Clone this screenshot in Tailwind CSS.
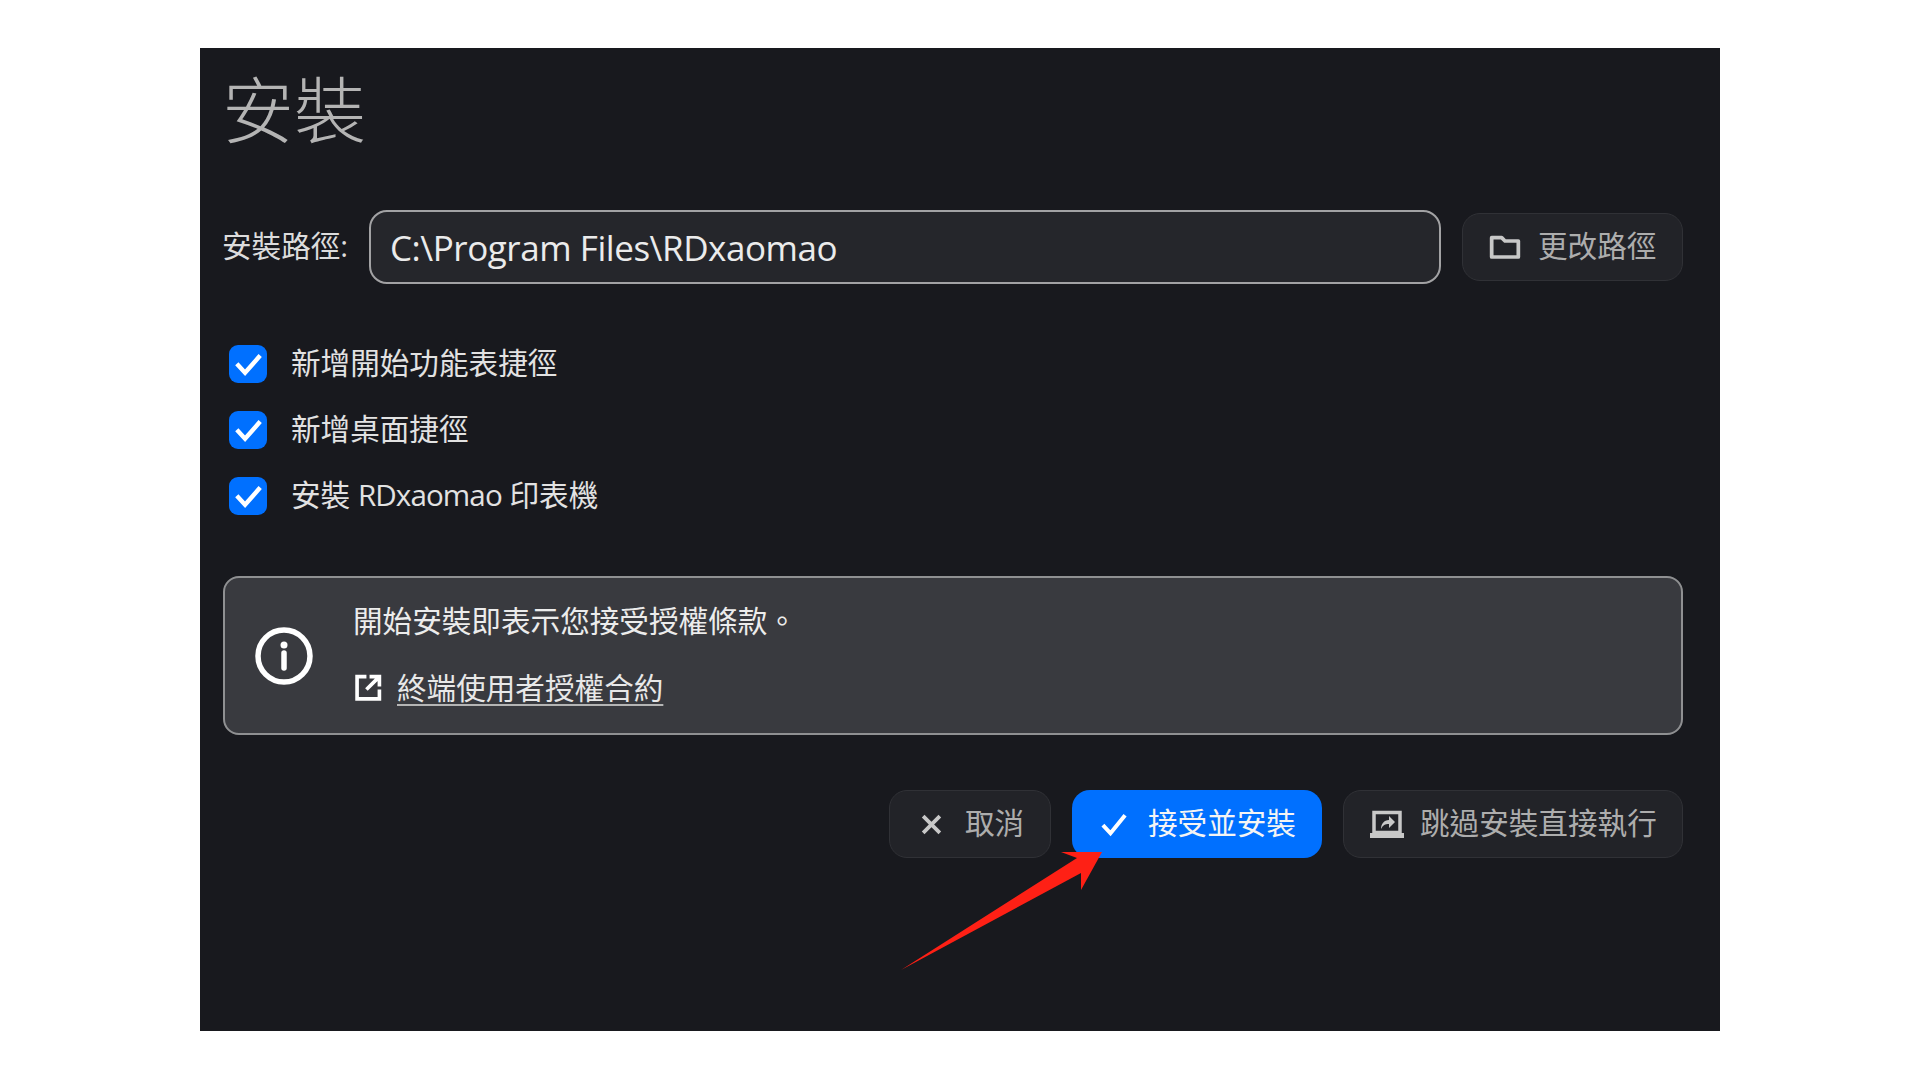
<!DOCTYPE html>
<html lang="zh-Hant">
<head>
    <meta charset="UTF-8">
    <meta name="viewport" content="width=device-width, initial-scale=1.0">
    <title>安裝</title>
    <script src="https://cdn.jsdelivr.net/npm/@tailwindcss/browser@4"></script>
</head>
<body class="bg-white w-[1920px] h-[1080px] overflow-hidden pt-[48px] pl-[200px] font-['Open_Sans','Noto_Sans_CJK_TC',sans-serif]">

<div class="relative w-[1520px] h-[983px] bg-[#18191e] pl-[23px] pr-[37px] pt-[25px]">
    <h1 class="h-[72px] -ml-[1px] text-[72px] leading-[72px] font-light text-[#b4b4b4]">安裝</h1>

    <!-- path row -->
    <div class="flex items-center h-[74px] mt-[65px] -ml-[1px]">
        <label class="w-[147px] pb-[2px] text-[29.600px] text-[#dcdcdc] whitespace-nowrap">安裝路徑:</label>
        <div class="flex items-center w-[1072px] h-[74px] pl-[19px] pt-[2px] rounded-[18px] border-[2.500px] border-[#a2a2a4] bg-[#25262b] text-[35px] tracking-[-0.450px] text-[#ebebeb]">C:\Program Files\RDxaomao</div>
        <button class="flex items-center gap-[17px] w-[221px] h-[68px] ml-[21px] pl-[26px] rounded-[18px] border border-[#303136] bg-[#222328] text-[29.600px] text-[#adadad] whitespace-nowrap">
            <svg class="w-[32px] h-[32px]" viewBox="0 0 24 24" fill="none" stroke="#c8c8c8" stroke-width="2.800" stroke-linejoin="round"><path d="M2 5h7.500l2.500 2.500h10v12h-20z"/></svg>
            <span class="pb-[2px]">更改路徑</span>
        </button>
    </div>

    <!-- options -->
    <div class="flex flex-col gap-[28px] mt-[61px] pl-[6px]">
        <div class="flex items-center gap-[24px] h-[38px]">
            <span class="flex items-center justify-center w-[38px] h-[38px] rounded-[9px] bg-[#0070ff]">
                <svg class="w-[33px] h-[33px]" viewBox="0 0 24 24" fill="none" stroke="#fff" stroke-width="3.200"><path d="M3.500 11.500l6 6.500 11-12.500"/></svg>
            </span>
            <span class="pb-[1px] text-[29.600px] text-[#e2e2e2]">新增開始功能表捷徑</span>
        </div>
        <div class="flex items-center gap-[24px] h-[38px]">
            <span class="flex items-center justify-center w-[38px] h-[38px] rounded-[9px] bg-[#0070ff]">
                <svg class="w-[33px] h-[33px]" viewBox="0 0 24 24" fill="none" stroke="#fff" stroke-width="3.200"><path d="M3.500 11.500l6 6.500 11-12.500"/></svg>
            </span>
            <span class="pb-[1px] text-[29.600px] text-[#e2e2e2]">新增桌面捷徑</span>
        </div>
        <div class="flex items-center gap-[24px] h-[38px]">
            <span class="flex items-center justify-center w-[38px] h-[38px] rounded-[9px] bg-[#0070ff]">
                <svg class="w-[33px] h-[33px]" viewBox="0 0 24 24" fill="none" stroke="#fff" stroke-width="3.200"><path d="M3.500 11.500l6 6.500 11-12.500"/></svg>
            </span>
            <span class="pb-[1px] text-[29.600px] text-[#e2e2e2]">安裝 <span class="tracking-[-0.900px]">RDxaomao</span> 印表機</span>
        </div>
    </div>

    <!-- licence notice -->
    <div class="flex items-center w-[1460px] h-[159px] mt-[61px] pl-[31px] rounded-[16px] border-[2.500px] border-[#8f9092] bg-[#393a3f]">
        <svg class="w-[58px] h-[58px] shrink-0 -ml-[1px]" viewBox="0 0 58 58" fill="none" stroke="#fff">
            <circle cx="29" cy="29" r="26" stroke-width="5.500"/>
            <circle cx="29" cy="18" r="3.500" fill="#fff" stroke="none"/>
            <path d="M29 26v15" stroke-width="5.500" stroke-linecap="round"/>
        </svg>
        <div class="ml-[40px] -mt-[3px]">
            <p class="text-[29.600px] leading-[40px] text-[#ececec] whitespace-nowrap">開始安裝即表示您接受授權條款。</p>
            <a class="flex items-center gap-[15px] mt-[27px] ml-[2px] text-[29.600px] leading-[40px] text-[#e8e8e8]">
                <svg class="w-[27px] h-[27px] shrink-0" viewBox="0 0 26 26" fill="none" stroke="#fff" stroke-width="3.500"><path d="M11 2.500h-9v21.500h21.500v-9M14 2.500h9.500v9.500M23 3l-12 12"/></svg>
                <span class="underline decoration-2 underline-offset-[5px] decoration-[#b5b5b5]">終端使用者授權合約</span>
            </a>
        </div>
    </div>

    <!-- actions -->
    <div class="flex justify-end gap-[21px] w-[1460px] mt-[55px]">
        <button class="flex items-center gap-[21px] w-[162px] h-[68px] pl-[29px] rounded-[18px] border border-[#303136] bg-[#222328] text-[29.600px] text-[#adadad]">
            <svg class="w-[25px] h-[25px]" viewBox="0 0 24 24" fill="none" stroke="#c8c8c8" stroke-width="3.600"><path d="M4 4l16 16M20 4l-16 16"/></svg>
            <span class="pb-[2px]">取消</span>
        </button>
        <button class="flex items-center gap-[20px] w-[250px] h-[68px] pl-[28px] rounded-[18px] bg-[#0070ff] text-[29.600px] text-[#f4f4f4]">
            <svg class="w-[28px] h-[28px]" viewBox="0 0 24 24" fill="none" stroke="#fff" stroke-width="3.400"><path d="M2.500 13l6.500 7 12.500-15.500"/></svg>
            <span class="pb-[2px]">接受並安裝</span>
        </button>
        <button class="flex items-center gap-[15px] w-[340px] h-[68px] pl-[25px] rounded-[18px] border border-[#303136] bg-[#222328] text-[29.600px] text-[#adadad] whitespace-nowrap">
            <svg class="w-[36px] h-[32px]" viewBox="0 0 36 32" fill="none">
                <path d="M5 4.500h26v20h-26z" stroke="#c8c8c8" stroke-width="3.500"/>
                <path d="M1 25h34v5h-34z" fill="#c8c8c8"/>
                <path d="M12 21c0-5 3-9 8-9v-4l6 6-6 6v-4c-4 0-6 1-8 5z" fill="#c8c8c8"/>
            </svg>
            <span class="pb-[2px]">跳過安裝直接執行</span>
        </button>
    </div>

    <!-- red annotation arrow -->
    <svg class="absolute left-0 top-0 w-[1520px] h-[983px] pointer-events-none" viewBox="0 0 1520 983">
        <path d="M701 922L877 810L861 804L902 804L881 842L881 825Z" fill="#fe2015"/>
    </svg>
</div>

</body>
</html>
